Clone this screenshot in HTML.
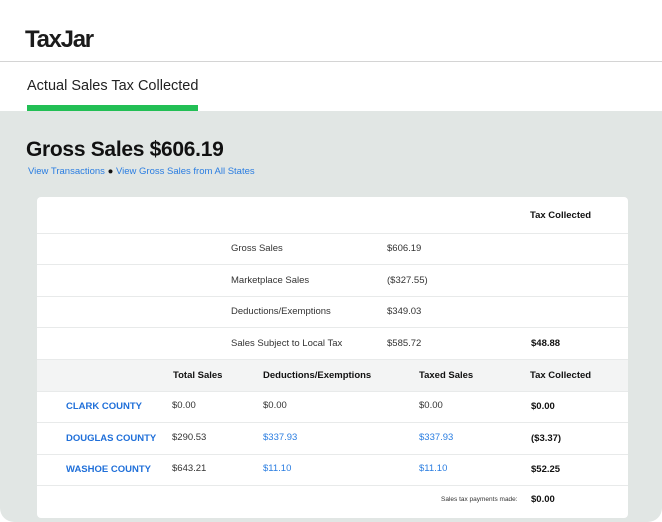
<!DOCTYPE html>
<html><head><style>
*{margin:0;padding:0;box-sizing:border-box}
body{width:662px;height:522px;background:#fff;font-family:"Liberation Sans",sans-serif;position:relative;overflow:hidden;color:#222}
.a{position:absolute;white-space:nowrap}
.logo{left:25px;top:26px;font-size:24px;font-weight:bold;letter-spacing:-1.3px;color:#1b1b1b}
.hr{left:0;top:61px;width:662px;height:1px;background:#d4d4d4}
.tab{left:27px;top:78px;font-size:14.5px;color:#222}
.bar{left:27px;top:105px;width:171px;height:6px;background:#22bf55}
.grey{left:0;top:111px;width:662px;height:411px;background:#e1e6e4;border-radius:0 0 14px 14px}
.h1{left:26px;top:138px;font-size:21px;font-weight:bold;color:#111;letter-spacing:-0.3px}
.links{left:28px;top:166px;font-size:9.5px;color:#2a7de1}
.card{left:37px;top:197px;width:591px;height:321px;background:#fff;border-radius:4px;overflow:hidden}
.ln{position:absolute;left:0;width:591px;height:1px;background:#e8eaea}
.c{position:absolute;font-size:9.5px;color:#333;white-space:nowrap}
.b{font-weight:bold;color:#111}
.bl{color:#2a7de1}
.co{font-weight:bold;color:#1f6fd9}
</style></head><body>
<div class="a logo">TaxJar</div>
<div class="a hr"></div>
<div class="a tab">Actual Sales Tax Collected</div>
<div class="a bar"></div>
<div class="a grey"></div>
<div class="a h1">Gross Sales $606.19</div>
<div class="a links">View Transactions <span style="color:#111">&#9679;</span> View Gross Sales from All States</div>
<div class="a card">
<div style="position:absolute;left:0;top:162px;width:591px;height:32px;background:#f3f4f4"></div>
<div class="ln" style="top:36px"></div>
<div class="ln" style="top:67px"></div>
<div class="ln" style="top:99px"></div>
<div class="ln" style="top:130px"></div>
<div class="ln" style="top:162px"></div>
<div class="ln" style="top:194px"></div>
<div class="ln" style="top:225px"></div>
<div class="ln" style="top:257px"></div>
<div class="ln" style="top:288px"></div>
<div class="c b" style="left:493px;top:13px">Tax Collected</div>
<div class="c" style="left:194px;top:46px">Gross Sales</div><div class="c" style="left:350px;top:46px">$606.19</div>
<div class="c" style="left:194px;top:78px">Marketplace Sales</div><div class="c" style="left:350px;top:78px">($327.55)</div>
<div class="c" style="left:194px;top:109px">Deductions/Exemptions</div><div class="c" style="left:350px;top:109px">$349.03</div>
<div class="c" style="left:194px;top:141px">Sales Subject to Local Tax</div><div class="c" style="left:350px;top:141px">$585.72</div><div class="c b" style="left:494px;top:141px">$48.88</div>
<div class="c b" style="left:136px;top:173px">Total Sales</div><div class="c b" style="left:226px;top:173px">Deductions/Exemptions</div><div class="c b" style="left:382px;top:173px">Taxed Sales</div><div class="c b" style="left:493px;top:173px">Tax Collected</div>
<div class="c co" style="left:29px;top:204px">CLARK COUNTY</div><div class="c" style="left:135px;top:203px">$0.00</div><div class="c" style="left:226px;top:203px">$0.00</div><div class="c" style="left:382px;top:203px">$0.00</div><div class="c b" style="left:494px;top:204px">$0.00</div>
<div class="c co" style="left:29px;top:236px">DOUGLAS COUNTY</div><div class="c" style="left:135px;top:235px">$290.53</div><div class="c bl" style="left:226px;top:235px">$337.93</div><div class="c bl" style="left:382px;top:235px">$337.93</div><div class="c b" style="left:494px;top:236px">($3.37)</div>
<div class="c co" style="left:29px;top:267px">WASHOE COUNTY</div><div class="c" style="left:135px;top:266px">$643.21</div><div class="c bl" style="left:226px;top:266px">$11.10</div><div class="c bl" style="left:382px;top:266px">$11.10</div><div class="c b" style="left:494px;top:267px">$52.25</div>
<div class="c" style="left:404px;top:299px;font-size:6.5px">Sales tax payments made:</div><div class="c b" style="left:494px;top:297px">$0.00</div>
</div>
</body></html>
